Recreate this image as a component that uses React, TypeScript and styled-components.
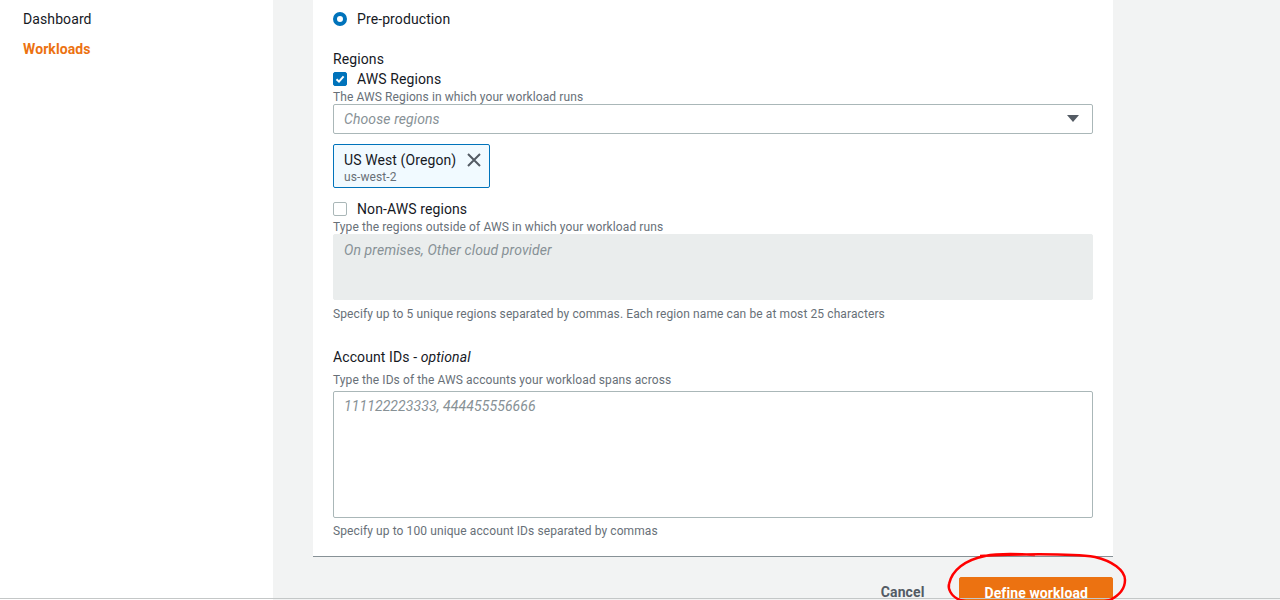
import React from "react";
import styled, { createGlobalStyle } from "styled-components";

const GlobalStyle = createGlobalStyle`
  html, body {
    margin: 0;
    padding: 0;
    height: 600px;
    overflow: hidden;
    background: #ffffff;
    font-family: Roboto, "Liberation Sans", Arial, sans-serif;
    letter-spacing: 0.1px;
    color: #16191f;
  }
`;

const Layout = styled.div`
  display: flex;
  height: 600px;
`;

const Sidebar = styled.nav`
  width: 273px;
  flex-shrink: 0;
  background: #ffffff;
  padding: 9px 0 0 23px;
  box-sizing: border-box;
`;

const NavItem = styled.div<{ $active?: boolean }>`
  font-size: 14px;
  line-height: 20px;
  height: 30px;
  color: ${({ $active }) => ($active ? "#ec7211" : "#16191f")};
  font-weight: ${({ $active }) => ($active ? 700 : 400)};
`;

const Main = styled.main`
  flex: 1;
  background: #f2f3f3;
  padding-left: 40px;
`;

const Panel = styled.section`
  width: 800px;
  box-sizing: border-box;
  background: #ffffff;
  padding: 9px 20px 17px 20px;
  border-bottom: 1px solid #879196;
`;

const ChoiceRow = styled.label<{ $mt?: number }>`
  display: flex;
  align-items: center;
  gap: 10px;
  font-size: 14px;
  line-height: 20px;
  margin-top: ${({ $mt }) => $mt ?? 0}px;
`;

const Radio = styled.span`
  width: 14px;
  height: 14px;
  box-sizing: border-box;
  border-radius: 50%;
  border: 4px solid #0073bb;
  background: #ffffff;
  flex-shrink: 0;
`;

const Checkbox = styled.span<{ $checked?: boolean }>`
  width: 14px;
  height: 14px;
  box-sizing: border-box;
  border-radius: 2px;
  flex-shrink: 0;
  display: flex;
  align-items: center;
  justify-content: center;
  background: ${({ $checked }) => ($checked ? "#0073bb" : "#ffffff")};
  border: 1px solid ${({ $checked }) => ($checked ? "#0073bb" : "#aab7b8")};
`;

const Label = styled.div<{ $mt?: number }>`
  font-size: 14px;
  line-height: 20px;
  color: #16191f;
  margin-top: ${({ $mt }) => $mt ?? 0}px;

  i {
    font-style: italic;
  }
`;

const Hint = styled.div<{ $mt?: number; $lh?: number }>`
  font-size: 12px;
  line-height: ${({ $lh }) => $lh ?? 15}px;
  padding-top: 2px;
  color: #687078;
  margin-top: ${({ $mt }) => $mt ?? 0}px;
`;

const Select = styled.div`
  height: 30px;
  box-sizing: border-box;
  width: 760px;
  border: 1px solid #aab7b8;
  border-radius: 2px;
  display: flex;
  align-items: center;
  justify-content: space-between;
  padding: 0 13px 0 10px;
`;

const Placeholder = styled.span`
  font-size: 14px;
  line-height: 20px;
  font-style: italic;
  color: #879196;
`;

const Token = styled.div`
  margin-top: 10px;
  display: inline-flex;
  align-items: flex-start;
  gap: 10px;
  box-sizing: border-box;
  height: 44px;
  padding: 5px 7px 4px 10px;
  background: #f1faff;
  border: 1px solid #0073bb;
  border-radius: 2px;
`;

const TokenText = styled.div`
  display: flex;
  flex-direction: column;
`;

const TokenName = styled.span`
  font-size: 14px;
  line-height: 20px;
  color: #16191f;
`;

const TokenSub = styled.span`
  font-size: 12px;
  line-height: 14px;
  color: #687078;
`;

const Dismiss = styled.button`
  border: 0;
  background: none;
  padding: 2px 0 0 0;
  display: flex;
  cursor: pointer;
`;

const TextArea = styled.div<{ $disabled?: boolean; $h: number; $mt?: number }>`
  width: 760px;
  height: ${({ $h }) => $h}px;
  box-sizing: border-box;
  margin-top: ${({ $mt }) => $mt ?? 0}px;
  padding: ${({ $disabled }) => ($disabled ? "5px 10px" : "4px 10px")};
  border-radius: 2px;
  background: ${({ $disabled }) => ($disabled ? "#eaeded" : "#ffffff")};
  border: 1px solid ${({ $disabled }) => ($disabled ? "#eaeded" : "#aab7b8")};
`;

const Actions = styled.div`
  width: 800px;
  display: flex;
  justify-content: flex-end;
  align-items: flex-start;
  gap: 15px;
  margin-top: 20px;
`;

const LinkButton = styled.button`
  border: 0;
  background: none;
  font-family: inherit;
  letter-spacing: 0.1px;
  font-size: 14px;
  font-weight: 700;
  line-height: 22px;
  color: #545b64;
  padding: 4px 20px;
`;

const PrimaryButton = styled.button`
  border: 1px solid #ec7211;
  background: #ec7211;
  border-radius: 2px;
  font-family: inherit;
  letter-spacing: 0.1px;
  font-size: 14px;
  font-weight: 700;
  line-height: 22px;
  color: #ffffff;
  padding: 4px 24px;
`;

const Annotation = styled.svg`
  position: absolute;
  left: 940px;
  top: 548px;
  pointer-events: none;
`;

const BottomEdge = styled.div`
  position: fixed;
  left: 0;
  right: 0;
  top: 598px;
  height: 1px;
  background: #c4c7c7;
`;

const CheckMark = () => (
  <svg width="10" height="10" viewBox="0 0 10 10">
    <path d="M1.5 5.2 L4 7.6 L8.6 2.4" fill="none" stroke="#fff" strokeWidth="2" />
  </svg>
);

const App = () => (
  <>
    <GlobalStyle />
    <Layout>
      <Sidebar>
        <NavItem>Dashboard</NavItem>
        <NavItem $active>Workloads</NavItem>
      </Sidebar>
      <Main>
        <Panel>
          <ChoiceRow>
            <Radio />
            Pre-production
          </ChoiceRow>

          <Label $mt={20}>Regions</Label>
          <ChoiceRow>
            <Checkbox $checked>
              <CheckMark />
            </Checkbox>
            AWS Regions
          </ChoiceRow>
          <Hint $lh={13}>The AWS Regions in which your workload runs</Hint>
          <Select>
            <Placeholder>Choose regions</Placeholder>
            <svg width="12" height="8" viewBox="0 0 12 8">
              <path d="M0 0 H12 L6 7 Z" fill="#545b64" />
            </svg>
          </Select>
          <Token>
            <TokenText>
              <TokenName>US West (Oregon)</TokenName>
              <TokenSub>us-west-2</TokenSub>
            </TokenText>
            <Dismiss aria-label="Remove">
              <svg width="16" height="16" viewBox="0 0 16 16">
                <path d="M2 2 L14 14 M14 2 L2 14" stroke="#545b64" strokeWidth="2" />
              </svg>
            </Dismiss>
          </Token>

          <ChoiceRow $mt={11}>
            <Checkbox />
            Non-AWS regions
          </ChoiceRow>
          <Hint $lh={13}>Type the regions outside of AWS in which your workload runs</Hint>
          <TextArea $disabled $h={66}>
            <Placeholder>On premises, Other cloud provider</Placeholder>
          </TextArea>
          <Hint $mt={5} $lh={15}>
            Specify up to 5 unique regions separated by commas. Each region name can be at most 25 characters
          </Hint>

          <Label $mt={25}>
            Account IDs - <i>optional</i>
          </Label>
          <Hint $mt={4} $lh={15}>
            Type the IDs of the AWS accounts your workload spans across
          </Hint>
          <TextArea $h={127} $mt={3}>
            <Placeholder>111122223333, 444455556666</Placeholder>
          </TextArea>
          <Hint $mt={4} $lh={15}>
            Specify up to 100 unique account IDs separated by commas
          </Hint>
        </Panel>
        <Actions>
          <LinkButton>Cancel</LinkButton>
          <PrimaryButton>Define workload</PrimaryButton>
        </Actions>
      </Main>
    </Layout>
    <BottomEdge />
    <Annotation width="200" height="60" viewBox="0 0 200 60">
      <path
        d="M40 8 C 70 6, 130 5, 155 9 C 172 13, 185 22, 185 32 C 185 42, 178 48, 170 52 C 150 58, 40 58, 20 52 C 10 48, 8 40, 9 36 C 12 22, 25 12, 45 8 C 60 5, 80 6, 95 7"
        fill="none"
        stroke="#ff0000"
        strokeWidth="2.5"
      />
    </Annotation>
  </>
);

export default App;
